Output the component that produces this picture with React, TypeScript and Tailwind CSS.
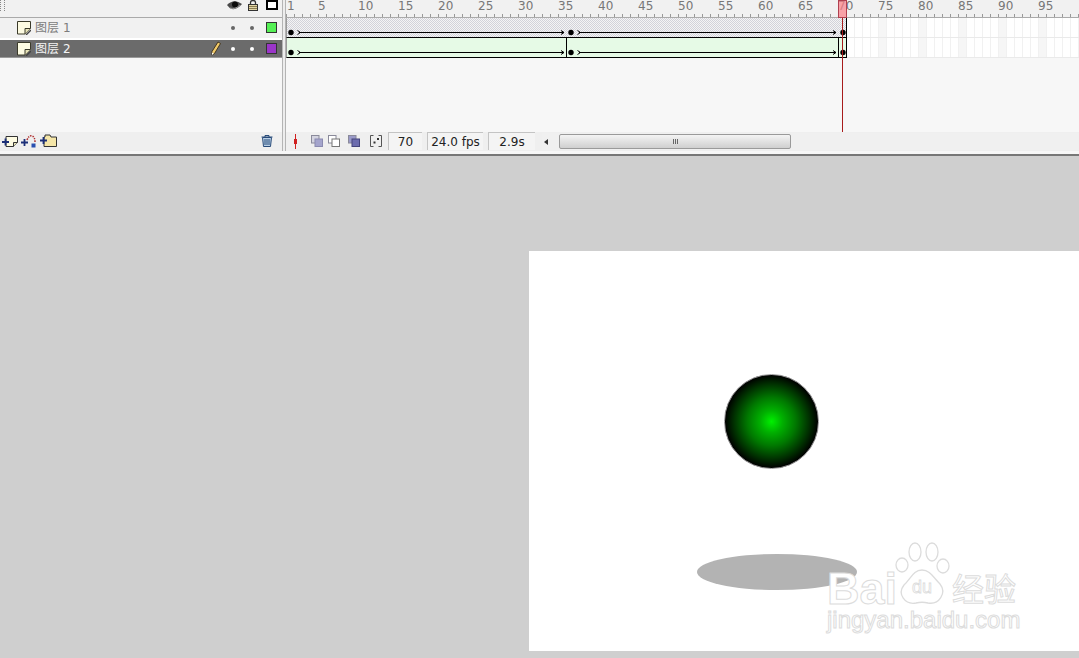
import React from 'react';

const labels = [5, 10, 15, 20, 25, 30, 35, 40, 45, 50, 55, 60, 65, 70, 75, 80, 85, 90, 95];
const sans = 'font-["DejaVu_Sans","Noto_Sans_CJK_SC",sans-serif]';

const spans = [
  { width: 280, arrow: true },
  { width: 272, arrow: true },
  { width: 8, arrow: false },
];

function LayerIcon() {
  return (
    <svg width="14" height="14" viewBox="0 0 14 14" className="shrink-0">
      <path d="M.5.5h13v7l-5.500 5.500H.5z" fill="#fdfbe2" stroke="#3a3a2a" />
      <path d="M8 13V7.500h5.500" fill="#e6e2b8" stroke="#3a3a2a" />
      <path d="M9 14l5-5" stroke="#444" strokeWidth="1.400" />
    </svg>
  );
}

function LayerRow({ name, color, active }: { name: string; color: string; active?: boolean }) {
  return (
    <div
      className={
        active
          ? 'flex h-5 items-center border-t-2 border-t-white border-b border-b-[#9a9a9a] bg-[#6b6b6b] text-[#f4f4f4]'
          : 'flex h-5 items-center bg-[#f1f1f1] pb-[1px] text-[#7c7c7c]'
      }
    >
      <div className="ml-[17px]">
        <LayerIcon />
      </div>
      <span className={`ml-[4px] text-[12px] tracking-[0.1px] ${sans}`}>{name}</span>
      <div className="ml-auto flex w-[72px] items-center">
        <div className="ml-px w-[15px]">
          {active && (
            <svg width="10" height="15" viewBox="0 0 10 15" className="block">
              <path d="M7 1l2.500 1.500L3.500 12.500 1 14l0-3.500z" fill="#f2cb6a" stroke="#3a2c18" strokeWidth="0.900" />
              <path d="M1 14l0-2.500 1.800 1.100z" fill="#fff" />
            </svg>
          )}
        </div>
        <span className={`ml-[5px] size-[4px] rounded-full ${active ? 'bg-white' : 'bg-[#666]'}`} />
        <span className={`ml-[15px] size-[4px] rounded-full ${active ? 'bg-white' : 'bg-[#666]'}`} />
        <span className="ml-[12px] size-[11px] border border-[#333]" style={{ background: color }} />
      </div>
    </div>
  );
}

function TweenSpan({ width, arrow, divided }: { width: number; arrow: boolean; divided: boolean }) {
  return (
    <div className={`h-full shrink-0 ${divided ? 'border-r border-black' : ''}`} style={{ width }}>
      <svg width={width} height="19" viewBox={`0 0 ${width} 19`} className="block overflow-visible">
        <circle cx="4" cy="14.500" r="2.700" fill="#000" />
        {arrow && (
          <g fill="none" stroke="#000">
            <path d="M10.500 12.500l3 2-3 2" />
            <path d={`M12 14.500H${width - 3}`} />
            <path d={`M${width - 6} 12.500l3 2-3 2`} />
          </g>
        )}
      </svg>
    </div>
  );
}

function FrameRow({ tinted, divided }: { tinted: string; divided: boolean }) {
  return (
    <div className="flex h-5">
      <div className={`flex h-5 w-[561px] shrink-0 border-b border-l border-b-black border-l-[#9a9a9a] ${tinted}`}>
        {spans.map((s, i) => (
          <TweenSpan key={i} width={s.width} arrow={s.arrow} divided={divided || i === 2} />
        ))}
      </div>
      <div className="flex-1 border-b border-[#eaeaea] bg-white bg-[linear-gradient(90deg,transparent_7px,#f1f1f1_7px),linear-gradient(90deg,transparent_31px,#f6f6f6_31px,#f6f6f6_39px,transparent_39px)] bg-size-[8px_100%,40px_100%]" />
    </div>
  );
}

function StatusCell({ width, children }: { width: string; children: React.ReactNode }) {
  return (
    <div className={`flex h-[18px] items-center justify-center border-l border-t border-[#c4c4c4] bg-[#f4f4f4] text-[12px] text-[#222] ${width} ${sans}`}>
      {children}
    </div>
  );
}

function OnionIcon({ back, front, edge }: { back: string; front: string; edge: string }) {
  return (
    <svg width="12" height="12" viewBox="0 0 12 12" className="block">
      <rect x="0.500" y="0.500" width="7.500" height="7.500" fill={back} stroke="#8a8a9a" />
      <rect x="4" y="4" width="7.500" height="7.500" fill={front} stroke={edge} />
    </svg>
  );
}

function Timeline() {
  return (
    <div className="flex h-[156px] shrink-0 flex-col border-b-2 border-[#777] bg-[#f7f7f7]">
      <div className="flex min-h-0 flex-1">
        {/* layer list */}
        <div className="flex w-[282px] shrink-0 flex-col">
          <div className="flex h-[18px] shrink-0 items-start overflow-hidden border-b border-[#aaaaaa] bg-[#f1f1f1]">
            <div className="h-[11px] w-[5px] border-x border-dotted border-[#888]" />
            <svg width="15" height="10" viewBox="0 0 15 10" className="ml-[222px]">
              <path d="M0 5Q7-2 15 4 10 10 5 9 2 8 0 5z" fill="#4a4a4a" />
              <circle cx="8" cy="4.500" r="3" fill="#0c0c0c" />
              <path d="M3 8q5 2 10-3" fill="none" stroke="#999" />
            </svg>
            <svg width="10" height="11" viewBox="0 0 10 11" className="ml-[6px]">
              <path d="M2.500 5V2.500a2.500 2 0 015 0V5" fill="none" stroke="#333" strokeWidth="1.300" />
              <rect x="0.500" y="4.500" width="9" height="6" fill="#e0d4a4" stroke="#333" />
              <path d="M1 6.500h8M1 8.500h8" stroke="#8a7c50" />
            </svg>
            <div className="ml-[8px] h-[10px] w-[12px] border-2 border-black bg-white" />
          </div>
          <LayerRow name="图层 1" color="#55f055" />
          <LayerRow name="图层 2" color="#9a35c8" active />
        </div>
        <div className="w-[4px] shrink-0 border-x border-[#b4b4b4] bg-[#ededed]" />
        {/* frames */}
        <div className="relative min-w-0 flex-1">
          <div className="flex h-[18px] flex-col overflow-hidden border-b border-[#aaaaaa] bg-[#f1f1f1]">
            <div className={`flex h-[13px] text-[12px] leading-[12px] text-[#777] ${sans}`}>
              <span className="w-[32px] shrink-0 pl-px">1</span>
              {labels.map((n) => (
                <span key={n} className="w-[40px] shrink-0">{n}</span>
              ))}
            </div>
            <div className="mt-auto h-[3px] bg-[linear-gradient(90deg,#999_1px,transparent_1px)] bg-size-[8px_100%]" />
          </div>
          <FrameRow tinted="bg-[repeating-conic-gradient(#d2d2da_0_25%,#f4f4f4_0_50%)] bg-size-[2px_2px]" divided={false} />
          <FrameRow tinted="bg-[#e6fae6]" divided />
          {/* playhead */}
          <div className="absolute left-[552px] top-0 h-[18px] w-[9px] border border-[#b04050] bg-[#fb7f88]/70" />
          <div className="absolute left-[556px] top-[18px] h-[114px] w-px bg-[#a81c1c]" />
        </div>
      </div>
      {/* bottom bar */}
      <div className="flex h-[22px] shrink-0 border-b-[3px] border-[#f7f7f7] bg-[#efefef]">
        <div className="flex w-[282px] shrink-0 items-start pt-[2px]">
          <div className="ml-[2px] flex items-center gap-[3px]">
            <svg width="16" height="13" viewBox="0 0 16 13">
              <path d="M4 1.500h11.500v6l-4 4H4z" fill="#fdfbe2" stroke="#333" />
              <path d="M11.500 11.500v-4h4" fill="#e6e2b8" stroke="#333" />
              <path d="M3.500 3.500v7M0 7h7" stroke="#1c2f78" strokeWidth="1.800" />
            </svg>
            <svg width="16" height="13" viewBox="0 0 16 13">
              <path d="M6 5q2-5 5-4 3 1 3 6" fill="none" stroke="#b03030" strokeDasharray="1.500 1" strokeWidth="1.500" />
              <path d="M3.500 4v7M0 7.500h7" stroke="#1c2f78" strokeWidth="1.800" />
              <rect x="10.500" y="8.500" width="4" height="4" fill="#2a50b0" />
            </svg>
            <svg width="17" height="14" viewBox="0 0 17 14">
              <path d="M4 3h1V1h5l1 2h5.500v9.500H4z" fill="#f5e6a8" stroke="#333" />
              <path d="M3.500 3v7M0 6.500h7" stroke="#1c2f78" strokeWidth="1.800" />
            </svg>
          </div>
          <svg width="12" height="13" viewBox="0 0 12 13" className="ml-[204px]">
            <path d="M.5 3h11M4 3V1.500h4V3" fill="none" stroke="#274a78" />
            <path d="M1.500 3.500h9l-1 9h-7z" fill="#b8cfe6" stroke="#274a78" />
            <path d="M4 5v6M6 5v6M8 5v6" stroke="#274a78" />
          </svg>
        </div>
        <div className="w-[4px] shrink-0 border-x border-[#b4b4b4] bg-[#ededed]" />
        <div className="flex min-w-0 flex-1 items-start">
          <svg width="13" height="15" viewBox="0 0 13 15" className="ml-[3px] mt-[2px]">
            <path d="M6.500 0v15" stroke="#d02020" />
            <rect x="5" y="5" width="3" height="5" fill="#d02020" />
          </svg>
          <div className="ml-[9px] mt-[3px] flex gap-[5px]">
            <OnionIcon back="#d4d4e0" front="#a4a4cc" edge="#8a8ab0" />
            <OnionIcon back="#ffffff" front="#ffffff" edge="#777777" />
          </div>
          <div className="ml-[8px] mt-[3px]">
            <OnionIcon back="#9a9ac8" front="#6c6cae" edge="#44447c" />
          </div>
          <svg width="12" height="12" viewBox="0 0 12 12" className="ml-[10px] mt-[3px]">
            <path d="M3.500.5h-3v11h3M8.500.5h3v11h-3" fill="none" stroke="#555" />
            <rect x="7" y="3" width="2" height="2" fill="#333" />
            <rect x="3.500" y="6.500" width="2" height="2" fill="#333" />
          </svg>
          <div className="ml-[6px] flex items-start">
            <StatusCell width="w-[34px]">70</StatusCell>
            <div className="w-[5px]" />
            <StatusCell width="w-[56px]">24.0 fps</StatusCell>
            <div className="w-[5px]" />
            <StatusCell width="w-[47px]">2.9s</StatusCell>
          </div>
          <div className="ml-[7px] mt-[1px] flex h-[17px] flex-1 items-center bg-[#f0f0f0]">
            <span className="ml-[2px] size-0 border-y-[3px] border-r-[4px] border-y-transparent border-r-[#333]" />
            <div className="ml-[11px] flex h-[15px] w-[232px] items-center justify-center gap-px rounded-[2px] border border-[#9a9a9a] bg-linear-to-b from-[#f4f4f4] to-[#cfcfcf]">
              <span className="h-[5px] w-px bg-[#666]" />
              <span className="h-[5px] w-px bg-[#666]" />
              <span className="h-[5px] w-px bg-[#666]" />
            </div>
          </div>
        </div>
      </div>
    </div>
  );
}

function Watermark() {
  const outline = 'text-white [-webkit-text-stroke:1px_#dcdcdc]';
  return (
    <div className="absolute left-[298px] top-[290px] w-[200px] whitespace-nowrap">
      <div className="flex h-[66px] items-start">
        <span className={`mt-[30px] text-[45px] font-bold leading-[36px] ${outline} font-["Liberation_Sans",sans-serif]`}>Bai</span>
        <svg width="62" height="66" viewBox="0 0 62 66" className="ml-[-4px] shrink-0">
          <g fill="#fff" stroke="#dcdcdc" strokeWidth="1.300">
            <ellipse cx="9" cy="24" rx="6" ry="7" />
            <ellipse cx="22" cy="11" rx="6" ry="9" />
            <ellipse cx="39" cy="11" rx="6" ry="9" />
            <ellipse cx="50" cy="25" rx="6" ry="7" />
            <path d="M29 29c8 0 11 7 18 14 7 9-1 21-12 19-4-1-8-1-12 0-11 2-19-9-12-18 7-6 9-15 18-15z" />
          </g>
          <text x="29" y="52" textAnchor="middle" fontSize="18" fontFamily="Liberation Sans" fill="#fff" stroke="#dcdcdc" strokeWidth="0.800">du</text>
        </svg>
        <span className={`ml-[-3px] mt-[29px] text-[32px] leading-[34px] ${outline} font-["Noto_Sans_CJK_SC",sans-serif]`}>经验</span>
      </div>
      <div className={`text-[24px] leading-[26px] ${outline} font-["Liberation_Sans",sans-serif]`}>jingyan.baidu.com</div>
    </div>
  );
}

export default function App() {
  return (
    <div className="flex h-[658px] w-[1079px] flex-col overflow-hidden bg-[#cfcfcf]">
      <Timeline />
      <div className="flex-1 pl-[529px] pt-[95px]">
        <div className="relative h-[400px] bg-white">
          <div className="absolute left-[195px] top-[123px] size-[95px] rounded-full border border-[#999] bg-[radial-gradient(circle_closest-side,#00f000_0%,#00b000_24%,#007800_52%,#002e00_82%,#000_100%)]" />
          <div className="absolute left-[168px] top-[303px] h-[36px] w-[160px] rounded-[50%] bg-[#b3b3b3]" />
          <Watermark />
        </div>
      </div>
    </div>
  );
}
